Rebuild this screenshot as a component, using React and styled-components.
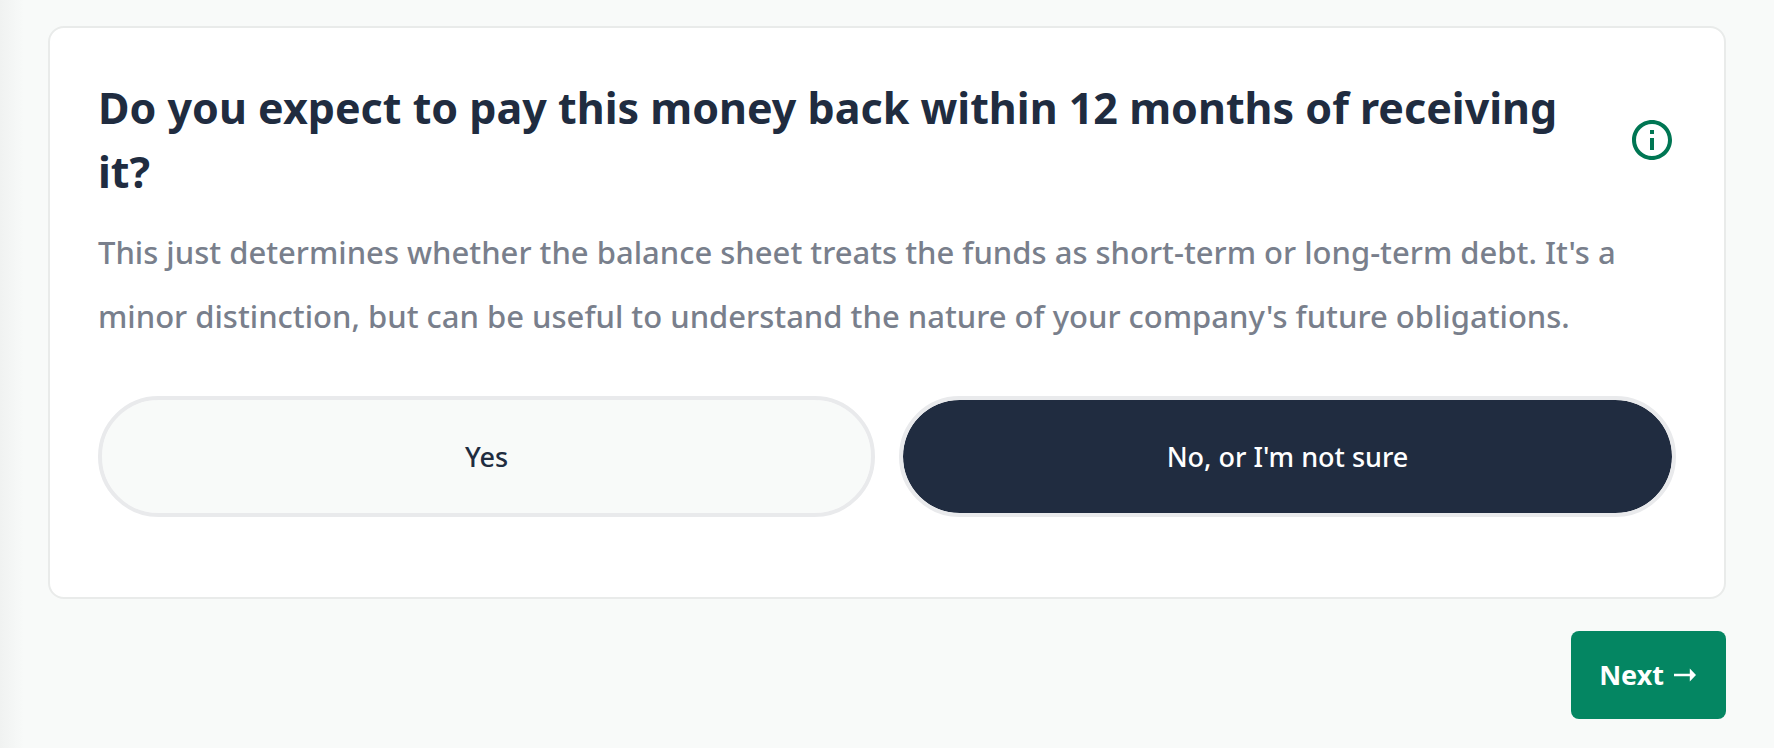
import React, { useState } from "react";
import styled, { createGlobalStyle } from "styled-components";

const GlobalStyle = createGlobalStyle`
  *, *::before, *::after { box-sizing: border-box; }
  body {
    margin: 0;
    background: #f8faf9;
    color: #202c40;
    font-family: "Noto Sans", sans-serif;
  }
`;

const Page = styled.main`
  min-height: 100vh;
  padding: 26px 48px 28px;
  background: linear-gradient(to right, #f0f2f1, #f8faf9 24px);
`;

const Card = styled.section`
  padding: 48px 48px 80px;
  border: 2px solid #e9ebea;
  border-radius: 16px;
  background: #fff;
`;

const Header = styled.header`
  display: flex;
  align-items: center;
  justify-content: space-between;
  gap: 48px;
`;

const Title = styled.h1`
  margin: 0;
  font-size: 43px;
  line-height: 64px;
  font-weight: 700;
`;

const InfoButton = styled.button`
  display: flex;
  flex: none;
  padding: 0;
  border: 0;
  background: none;
  color: #007653;
  cursor: pointer;
`;

const Description = styled.p`
  margin: 16px 0 48px;
  color: #797f8c;
  font-size: 31px;
  font-weight: 500;
  line-height: 64px;
`;

const Choices = styled.div`
  display: grid;
  grid-template-columns: 1fr 1fr;
  gap: 24px;
`;

const Choice = styled.button`
  height: 121px;
  border: 4px solid #e9eaec;
  border-radius: 64px;
  background: ${({ $selected }) => ($selected ? "#202c40" : "#f8faf9")};
  background-clip: padding-box;
  color: ${({ $selected }) => ($selected ? "#fff" : "#202c40")};
  font: 500 27px/40px "Noto Sans", sans-serif;
  cursor: pointer;
`;

const Actions = styled.footer`
  display: flex;
  justify-content: flex-end;
  margin-top: 32px;
`;

const NextButton = styled.button`
  display: flex;
  align-items: center;
  gap: 10px;
  height: 88px;
  padding: 0 30px 0 28px;
  border: 0;
  border-radius: 8px;
  background: #048662;
  color: #fff;
  font: 700 27px/40px "Noto Sans", sans-serif;
  cursor: pointer;
`;

const options = ["Yes", "No, or I'm not sure"];

export default function App() {
  const [selected, setSelected] = useState(options[1]);
  return (
    <>
      <GlobalStyle />
      <Page>
        <Card>
          <Header>
            <Title>Do you expect to pay this money back within 12 months of receiving it?</Title>
            <InfoButton type="button" aria-label="More information">
              <svg width="48" height="48" viewBox="0 0 24 24" fill="currentColor" aria-hidden="true">
                <path d="M11 7h2v2h-2zm0 4h2v6h-2zm1-9C6.480 2 2 6.480 2 12s4.480 10 10 10 10-4.480 10-10S17.520 2 12 2zm0 18c-4.410 0-8-3.590-8-8s3.590-8 8-8 8 3.590 8 8-3.590 8-8 8z" />
              </svg>
            </InfoButton>
          </Header>
          <Description>
            This just determines whether the balance sheet treats the funds as short-term or long-term debt. It's a minor distinction, but can be useful to understand the nature of your company's future obligations.
          </Description>
          <Choices>
            {options.map((option) => (
              <Choice
                key={option}
                type="button"
                $selected={option === selected}
                aria-pressed={option === selected}
                onClick={() => setSelected(option)}
              >
                {option}
              </Choice>
            ))}
          </Choices>
        </Card>
        <Actions>
          <NextButton type="button">
            Next
            <svg width="22" height="16" viewBox="0 0 22 16" fill="currentColor" aria-hidden="true">
              <path d="M0 6.700h15.800V1.500L22 8l-6.200 6.500V9.300H0z" />
            </svg>
          </NextButton>
        </Actions>
      </Page>
    </>
  );
}
